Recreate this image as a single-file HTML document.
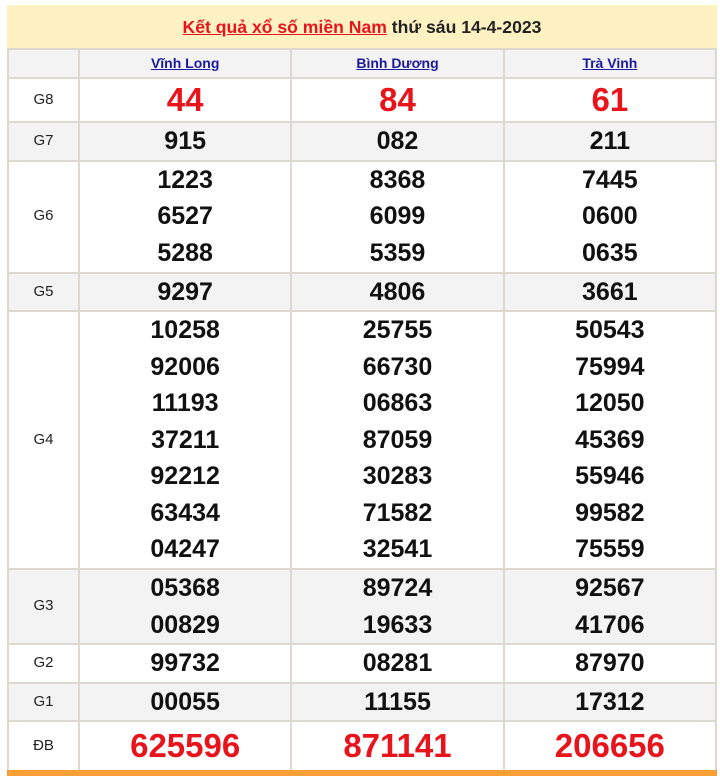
<!DOCTYPE html>
<html><head><meta charset="utf-8"><style>
body{margin:0;background:#fff;width:720px;height:776px;overflow:hidden;font-family:"Liberation Sans",Arial,sans-serif}
.wrap{position:absolute;left:7px;top:5px;width:710px}
.title{height:43px;background:#fff2c2;text-align:center;line-height:45px;font-size:17.6px;font-weight:bold;color:#222}
.title a{color:#e8141c;text-decoration:underline}
table{border-collapse:collapse;width:710px;table-layout:fixed}
td{border:2px solid #ddd8d0;text-align:center;padding:0;font-weight:bold;font-size:25px;color:#111;line-height:36.5px}
td.l{font-weight:normal;font-size:15px;color:#222}
tr.g td{background:#f3f3f3}
.h td{height:27px;line-height:27px;font-size:14px}
.h a{color:#1a1a9c;text-decoration:underline}
.r{color:#e8141c;font-size:33px}
.end{position:absolute;left:7px;top:770px;width:710px;height:6px;background:#f8a033}
</style></head><body>
<div class="wrap">
<div class="title"><a>Kết quả xổ số miền Nam</a> thứ sáu 14-4-2023</div>
<table>
<colgroup><col style="width:71px"><col><col><col></colgroup>
<tr class="g h"><td></td><td><a>Vĩnh Long</a></td><td><a>Bình Dương</a></td><td><a>Trà Vinh</a></td></tr>
<tr style="height:44px"><td class="l">G8</td><td class="r">44</td><td class="r">84</td><td class="r">61</td></tr>
<tr class="g" style="height:38px"><td class="l">G7</td><td>915</td><td>082</td><td>211</td></tr>
<tr style="height:112px"><td class="l">G6</td><td>1223<br>6527<br>5288</td><td>8368<br>6099<br>5359</td><td>7445<br>0600<br>0635</td></tr>
<tr class="g" style="height:38px"><td class="l">G5</td><td>9297</td><td>4806</td><td>3661</td></tr>
<tr style="height:258px"><td class="l">G4</td><td>10258<br>92006<br>11193<br>37211<br>92212<br>63434<br>04247</td><td>25755<br>66730<br>06863<br>87059<br>30283<br>71582<br>32541</td><td>50543<br>75994<br>12050<br>45369<br>55946<br>99582<br>75559</td></tr>
<tr class="g" style="height:74px"><td class="l">G3</td><td>05368<br>00829</td><td>89724<br>19633</td><td>92567<br>41706</td></tr>
<tr style="height:38px"><td class="l">G2</td><td>99732</td><td>08281</td><td>87970</td></tr>
<tr class="g" style="height:38px"><td class="l">G1</td><td>00055</td><td>11155</td><td>17312</td></tr>
<tr style="height:50px"><td class="l">ĐB</td><td class="r">625596</td><td class="r">871141</td><td class="r">206656</td></tr>
</table>
</div>
<div class="end"></div>
</body></html>
